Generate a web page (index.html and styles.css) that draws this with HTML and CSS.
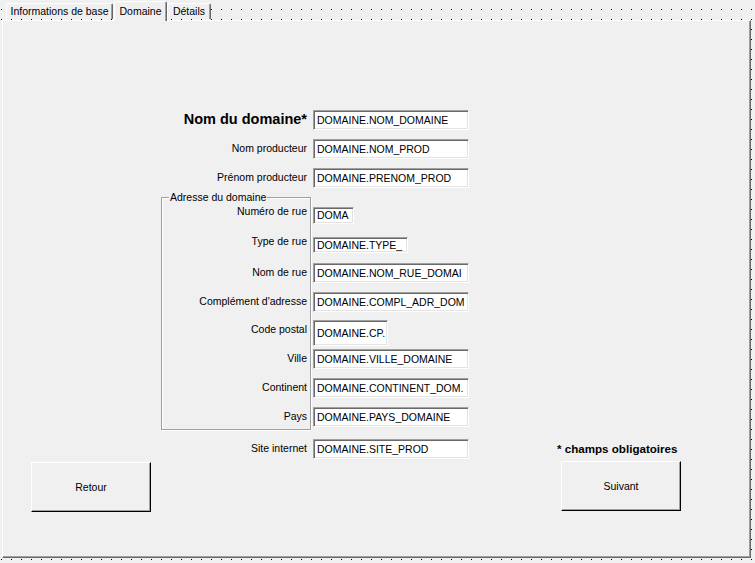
FILE: index.html
```html
<!DOCTYPE html>
<html lang="fr">
<head>
<meta charset="utf-8">
<title>Domaine</title>
<link rel="stylesheet" href="styles.css">
</head>
<body>
<div class="window">
  <div class="tabs">
    <div class="tab t1">Informations de base</div>
    <div class="tab t2 active">Domaine</div>
    <div class="tab t3">Détails</div>
  </div>
  <div class="panel">
    <div class="form">
      <div class="row">
        <span class="lbl main">Nom du domaine*</span>
        <span class="field">DOMAINE.NOM_DOMAINE</span>
      </div>
      <div class="row gap">
        <span class="lbl">Nom producteur</span>
        <span class="field">DOMAINE.NOM_PROD</span>
      </div>
      <div class="row gap">
        <span class="lbl">Prénom producteur</span>
        <span class="field">DOMAINE.PRENOM_PROD</span>
      </div>
      <div class="group">
        <span class="legend">Adresse du domaine</span>
        <div class="row first">
          <span class="lbl up">Numéro de rue</span>
          <span class="field f-num">DOMA</span>
        </div>
        <div class="row m13">
          <span class="lbl up">Type de rue</span>
          <span class="field f-type">DOMAINE.TYPE_</span>
        </div>
        <div class="row m10">
          <span class="lbl">Nom de rue</span>
          <span class="field">DOMAINE.NOM_RUE_DOMAI</span>
        </div>
        <div class="row gap">
          <span class="lbl">Complément d'adresse</span>
          <span class="field">DOMAINE.COMPL_ADR_DOM</span>
        </div>
        <div class="row m8">
          <span class="lbl">Code postal</span>
          <span class="field f-cp">DOMAINE.CP.</span>
        </div>
        <div class="row m3">
          <span class="lbl">Ville</span>
          <span class="field">DOMAINE.VILLE_DOMAINE</span>
        </div>
        <div class="row gap">
          <span class="lbl">Continent</span>
          <span class="field">DOMAINE.CONTINENT_DOM.</span>
        </div>
        <div class="row gap">
          <span class="lbl">Pays</span>
          <span class="field">DOMAINE.PAYS_DOMAINE</span>
        </div>
      </div>
      <div class="row gap">
        <span class="lbl">Site internet</span>
        <span class="field">DOMAINE.SITE_PROD</span>
      </div>
    </div>
    <p class="note">* champs obligatoires</p>
    <button class="btn retour" type="button">Retour</button>
    <button class="btn suivant" type="button">Suivant</button>
  </div>
</div>
</body>
</html>
```
FILE: styles.css
```css
html, body {
  margin: 0;
  padding: 0;
}

body {
  width: 755px;
  height: 563px;
  overflow: hidden;
  font-family: "Liberation Sans", Arial, sans-serif;
  font-size: 10.5px;
  color: #000;
  background-color: #f0f0f0;
  background-image:
    linear-gradient(to bottom, #f0f0f0 9px, transparent 9px),
    linear-gradient(to right, #f0f0f0 1px, #000 1px, #000 2px, #f0f0f0 2px);
  background-size: 10px 10px;
}

/* ---------- tabs ---------- */
.tabs {
  display: flex;
  align-items: flex-end;
  height: 20px;
  padding-left: 6px;
}

.tab {
  box-sizing: border-box;
  height: 16px;
  margin-bottom: 1px;
  padding-top: 1px;
  background: #f0f0f0;
  border-top: 1px solid #fff;
  border-left: 1px solid #fff;
  border-right: 1px solid #696969;
  box-shadow: inset -1px 0 #a0a0a0;
  border-radius: 2px 2px 0 0;
  text-align: center;
  line-height: 13px;
  white-space: nowrap;
}

.t1 { width: 107px; }
.t2 { width: 53px; margin-left: 1px; }
.t3 { width: 44px; }

.tab.active {
  height: 20px;
  margin-bottom: -1px;
  padding-top: 3px;
  position: relative;
  z-index: 1;
}

/* ---------- panel ---------- */
.panel {
  box-sizing: border-box;
  width: 749px;
  height: 538px;
  margin-left: 2px;
  padding-top: 89px;
  background: #f0f0f0;
  border: 1px solid;
  border-color: #fff #696969 #696969 #fff;
  box-shadow: inset -1px -1px #a0a0a0, -2px 0 0 0 #f0f0f0;
  display: grid;
  grid-template-columns: 158px 309px 1fr;
  grid-template-rows: auto auto;
  align-content: start;
}

.form {
  grid-column: 2;
  grid-row: 1;
}

.row {
  display: flex;
  align-items: flex-start;
  column-gap: 2px;
}

.row.gap { margin-top: 9px; }
.row.first { margin-top: 4px; }
.row.m13 { margin-top: 13px; }
.row.m10 { margin-top: 10px; }
.row.m8 { margin-top: 8px; }
.row.m3 { margin-top: 3px; }

.lbl {
  box-sizing: border-box;
  flex: none;
  width: 150px;
  padding-right: 4px;
  margin-top: 3px;
  text-align: right;
  line-height: 13px;
  white-space: nowrap;
}

.lbl.main {
  font-weight: bold;
  font-size: 14.5px;
  line-height: 16px;
  margin-top: 1px;
}

.lbl.up { margin-top: -2px; }

.field {
  box-sizing: border-box;
  flex: none;
  display: flex;
  align-items: center;
  width: 156px;
  height: 20px;
  padding: 0 2px 0 3px;
  background: #fff;
  border: 1px solid;
  border-color: #a0a0a0 #fff #fff #a0a0a0;
  box-shadow: inset 1px 1px #696969, inset -1px -1px #e3e3e3;
  overflow: hidden;
  white-space: nowrap;
  line-height: 13px;
}

.f-num { width: 41px; height: 17px; }
.f-type { width: 95px; height: 16px; }
.f-cp { width: 75px; height: 26px; }

.group {
  box-sizing: border-box;
  width: 150px;
  margin-top: 9px;
  padding-bottom: 2px;
  border: 1px solid #a0a0a0;
  box-shadow: inset 1px 1px #fff, 1px 1px #fff;
}

.group .row {
  width: 309px;
  margin-left: -1px;
}

.legend {
  display: block;
  width: max-content;
  margin: -7px 0 0 7px;
  padding: 0 1px;
  background: #f0f0f0;
  line-height: 12px;
  white-space: nowrap;
}

/* ---------- footer ---------- */
.note {
  grid-column: 3;
  grid-row: 1;
  align-self: end;
  justify-self: start;
  margin: 0 0 3px 87px;
  font-weight: bold;
  font-size: 11.6px;
  line-height: 14px;
  white-space: nowrap;
}

.btn {
  box-sizing: border-box;
  width: 120px;
  height: 50px;
  padding: 0;
  font: inherit;
  color: #000;
  background: #f0f0f0;
  border: 1px solid;
  border-color: #fff #000 #000 #fff;
  box-shadow: inset -1px -1px #a0a0a0;
  justify-self: start;
  align-self: start;
}

.retour {
  grid-column: 1;
  grid-row: 2;
  margin: 3px 0 0 28px;
}

.suivant {
  grid-column: 3;
  grid-row: 2;
  margin: 2px 0 0 91px;
}
```
